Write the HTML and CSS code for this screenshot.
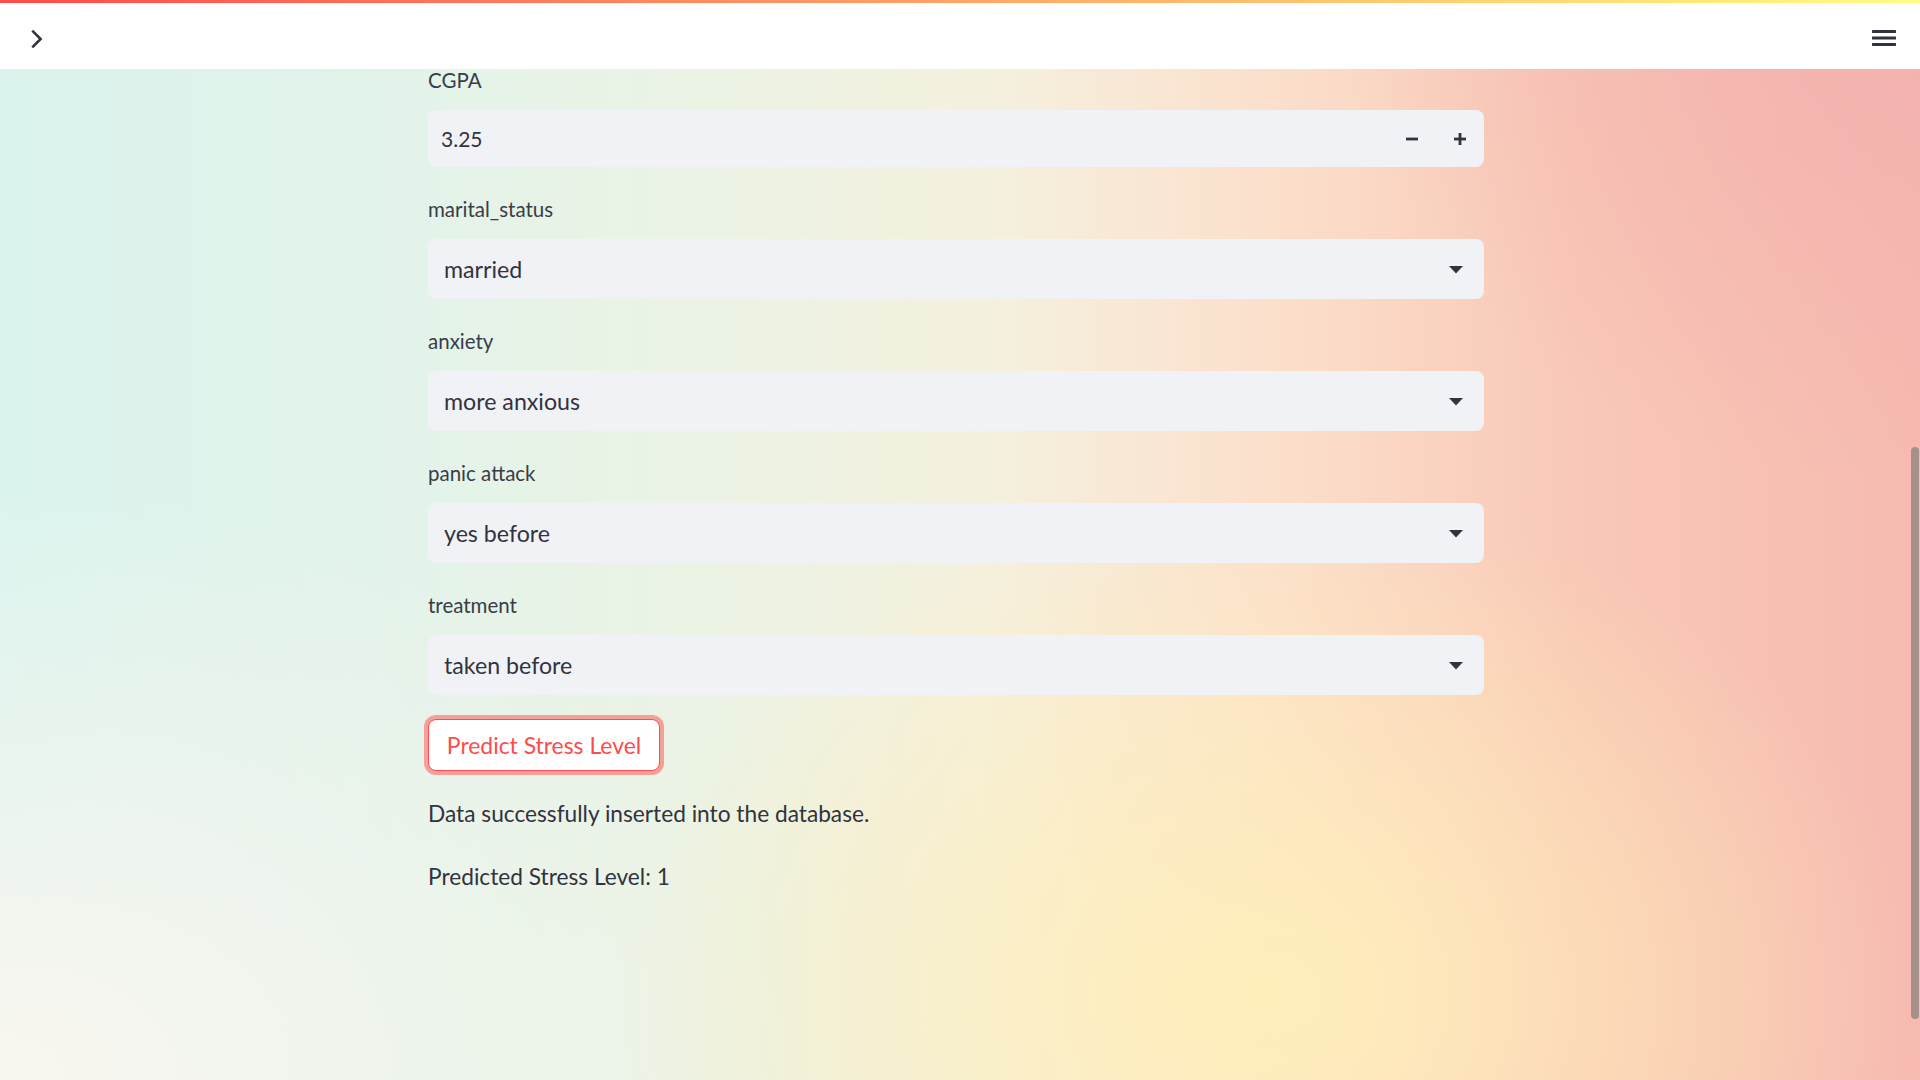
FILE: index.html
```html
<!DOCTYPE html>
<html lang="en">
<head>
<meta charset="utf-8">
<title>Stress Level Prediction</title>
<link rel="stylesheet" href="styles.css">
</head>
<body>
<header class="topbar">
  <div class="decoration"></div>
  <div class="topbar-inner">
    <button class="icon-btn toggle" aria-label="Open sidebar">
      <svg width="24" height="24" viewBox="0 0 24 24"><path d="M9.2 4.6 L16.6 12 L9.2 19.4" fill="none" stroke="#31333f" stroke-width="2.6" stroke-linecap="square" stroke-linejoin="miter"/></svg>
    </button>
    <button class="icon-btn menu" aria-label="Main menu">
      <svg width="24" height="24" viewBox="0 0 24 24"><rect x="0" y="4" width="24" height="3" rx="0.5" fill="#31333f"/><rect x="0" y="10.5" width="24" height="3" rx="0.5" fill="#31333f"/><rect x="0" y="17" width="24" height="3" rx="0.5" fill="#31333f"/></svg>
    </button>
  </div>
</header>

<main class="main">
  <div class="fields">
    <div class="field">
      <label class="label">CGPA</label>
      <div class="number-input">
        <span class="number-value">3.25</span>
        <div class="steppers">
          <button class="step" aria-label="Decrement"><svg width="14" height="14" viewBox="0 0 14 14"><rect x="1" y="5.6" width="12" height="2.8" fill="#31333f"/></svg></button>
          <button class="step" aria-label="Increment"><svg width="14" height="14" viewBox="0 0 14 14"><rect x="1" y="5.6" width="12" height="2.8" fill="#31333f"/><rect x="5.6" y="1" width="2.8" height="12" fill="#31333f"/></svg></button>
        </div>
      </div>
    </div>

    <div class="field">
      <label class="label">marital_status</label>
      <div class="select"><span class="select-value">married</span><svg class="caret" width="14" height="8" viewBox="0 0 14 8"><path d="M0 0 H14 L7 7.5 Z" fill="#31333f"/></svg></div>
    </div>

    <div class="field">
      <label class="label">anxiety</label>
      <div class="select"><span class="select-value">more anxious</span><svg class="caret" width="14" height="8" viewBox="0 0 14 8"><path d="M0 0 H14 L7 7.5 Z" fill="#31333f"/></svg></div>
    </div>

    <div class="field">
      <label class="label">panic attack</label>
      <div class="select"><span class="select-value">yes before</span><svg class="caret" width="14" height="8" viewBox="0 0 14 8"><path d="M0 0 H14 L7 7.5 Z" fill="#31333f"/></svg></div>
    </div>

    <div class="field">
      <label class="label">treatment</label>
      <div class="select"><span class="select-value">taken before</span><svg class="caret" width="14" height="8" viewBox="0 0 14 8"><path d="M0 0 H14 L7 7.5 Z" fill="#31333f"/></svg></div>
    </div>
  </div>

  <div class="results">
    <div class="btn-row"><button class="predict">Predict Stress Level</button></div>
    <p class="msg first">Data successfully inserted into the database.</p>
    <p class="msg">Predicted Stress Level: 1</p>
  </div>
</main>

<div class="scroll-thumb"></div>
</body>
</html>
```

FILE: styles.css
```css
* { box-sizing: border-box; }

html, body {
  margin: 0;
  padding: 0;
  height: 100%;
}

body {
  font-family: Lato, "Noto Sans", sans-serif;
  color: #31333f;
  overflow: hidden;
  background:
    radial-gradient(ellipse 34% 46% at 66% 92%, rgba(255, 239, 185, 0.95) 0%, rgba(255, 239, 185, 0) 100%),
    radial-gradient(ellipse 42% 55% at 0% 100%, rgba(249, 246, 239, 1) 0%, rgba(249, 246, 239, 0) 100%),
    radial-gradient(ellipse 30% 45% at 100% 0%, rgba(242, 176, 174, 0.9) 0%, rgba(242, 176, 174, 0) 100%),
    linear-gradient(90deg, #dbf3ee 0%, #e3f3ea 20%, #ecf3e4 38%, #f5f0de 52%, #fbe0cc 66%, #f9c8b6 82%, #f6bab0 100%);
}

.topbar {
  position: fixed;
  top: 0;
  left: 0;
  right: 0;
  height: 69px;
  background: #ffffff;
  z-index: 10;
}

.decoration {
  height: 3px;
  background: linear-gradient(90deg, #ff4b4b, #fffd80);
}

.topbar-inner {
  height: 66px;
  display: flex;
  align-items: flex-start;
  justify-content: space-between;
  padding: 24px 24px 0 24px;
}

.icon-btn {
  border: 0;
  background: transparent;
  padding: 0;
  width: 24px;
  height: 24px;
  display: block;
}
.icon-btn svg { display: block; }
.menu { margin-top: -1px; }

.main {
  width: 1056px;
  margin-left: 428px;
  padding-top: 66px;
}

.fields {
  display: flex;
  flex-direction: column;
  gap: 28px;
}

.field {
  display: flex;
  flex-direction: column;
}

.label {
  font-size: 20.5px;
  line-height: 28px;
  height: 28px;
  margin-bottom: 16px;
  color: #3a3c47;
}

.number-input {
  height: 57px;
  background: #f0f2f6;
  border-radius: 8px;
  display: flex;
  align-items: center;
  justify-content: space-between;
  padding-left: 13px;
}

.number-value {
  font-size: 21px;
}

.steppers {
  display: flex;
  height: 100%;
}

.step {
  width: 48px;
  height: 100%;
  border: 0;
  background: transparent;
  padding: 0;
  display: flex;
  align-items: center;
  justify-content: center;
}
.step svg { display: block; }

.select {
  height: 60px;
  background: #f0f2f6;
  border-radius: 8px;
  display: flex;
  align-items: center;
  justify-content: space-between;
  padding: 0 21px 0 16px;
}

.select-value {
  font-size: 23.2px;
}

.caret { display: block; margin-top: 1px; }

.results {
  margin-top: 24px;
}

.btn-row { display: flex; }

.predict {
  height: 52px;
  width: 232px;
  border: 1.5px solid #ff4b4b;
  border-radius: 8px;
  background: #ffffff;
  color: #ff4b4b;
  font-family: Lato, "Noto Sans", sans-serif;
  font-size: 22.9px;
  padding: 0 16px;
  box-shadow: 0 0 0 4px rgba(255, 75, 75, 0.5);
}

.msg {
  margin: 28px 0 0 0;
  font-size: 22.7px;
  line-height: 35px;
}
.msg.first { margin-top: 25px; }

.scroll-thumb {
  position: fixed;
  right: 1px;
  top: 447px;
  width: 8px;
  height: 572px;
  border-radius: 4px;
  background: #a8908a;
}
```
